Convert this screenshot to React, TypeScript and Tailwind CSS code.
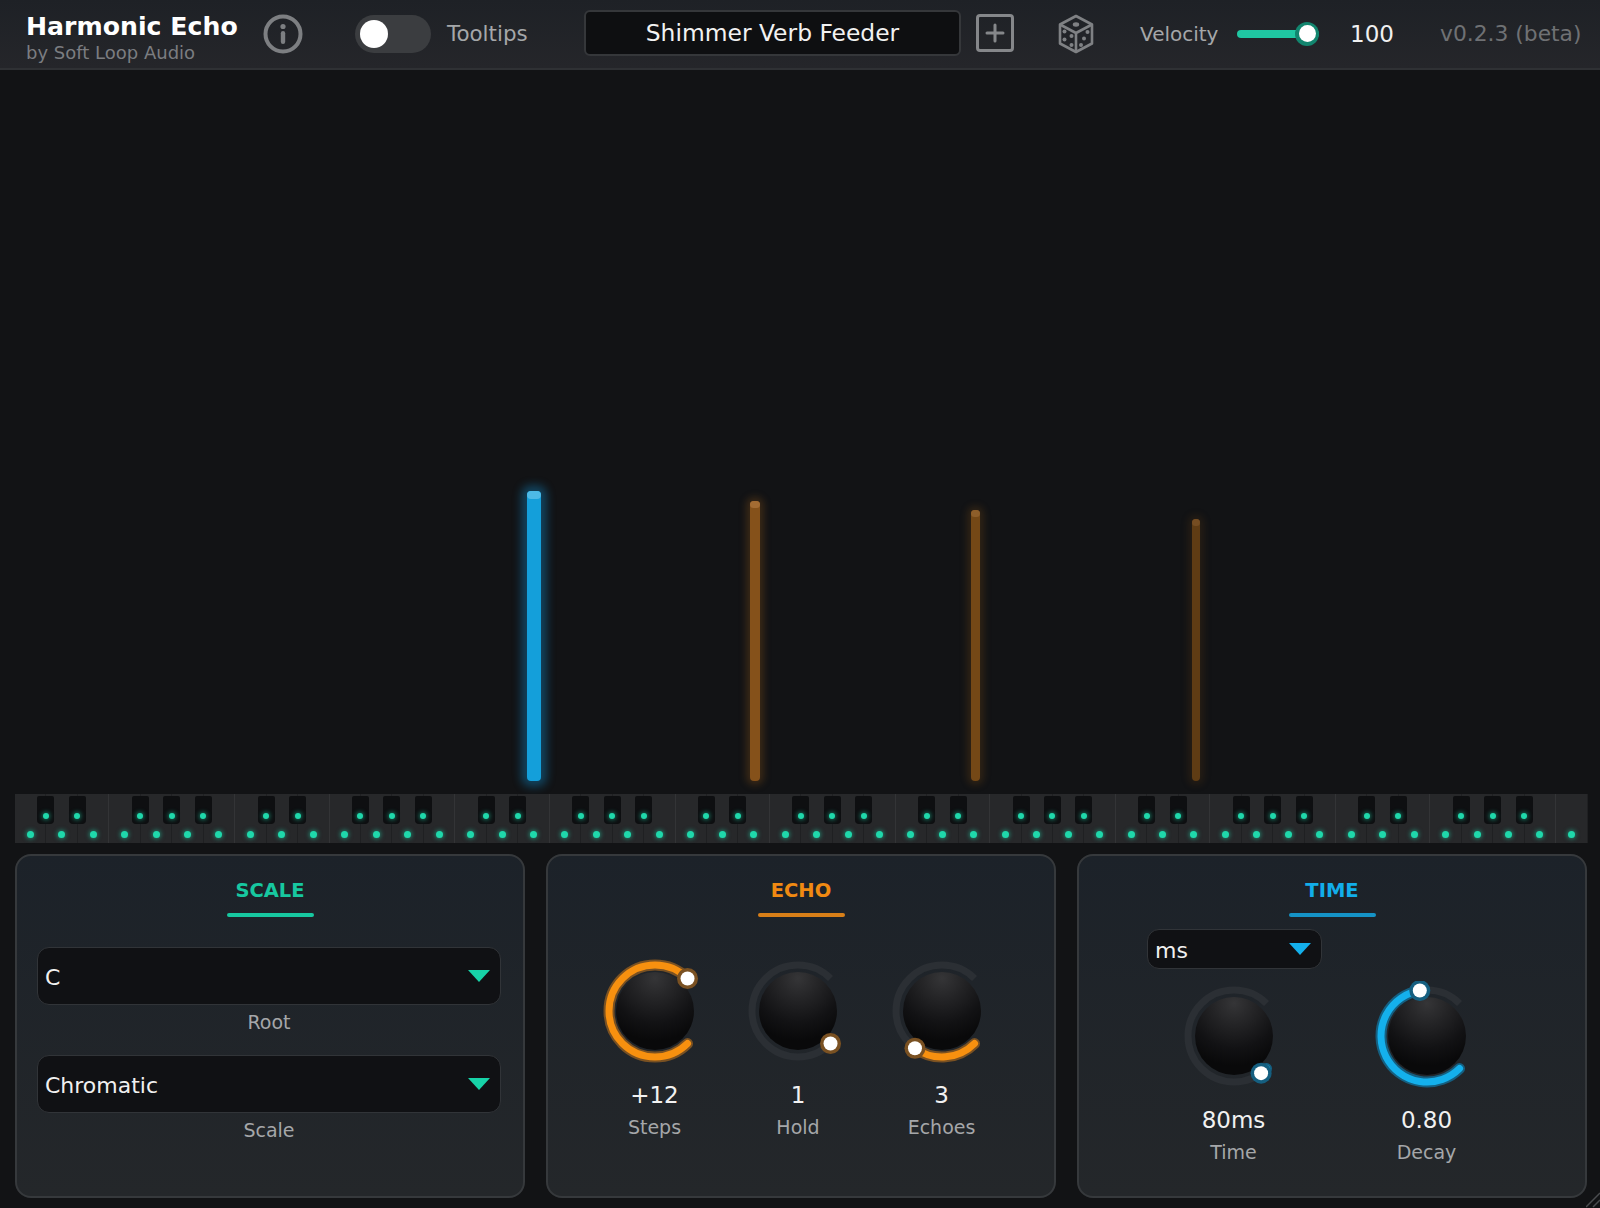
import React from 'react';

const blackAfter = [0, 1, 3, 4, 5];

const polar = (deg: number, r: number) => {
  const a = (deg * Math.PI) / 180;
  return [55 + r * Math.cos(a), 55 + r * Math.sin(a)];
};

const arcPath = (from: number, to: number, r: number) => {
  const [x1, y1] = polar(from, r);
  const [x2, y2] = polar(to, r);
  return `M${x1} ${y1}A${r} ${r} 0 ${to - from > 180 ? 1 : 0} 1 ${x2} ${y2}`;
};

const Knob = ({ id, value, color, ring }: { id: string; value: number; color: string; ring: string }) => {
  const end = 45 + value * 270;
  const [tx, ty] = polar(end, 46);
  return (
    <svg width="110" height="110" viewBox="0 0 110 110" className="block">
      <defs>
        <radialGradient id={id} cx="50%" cy="8%" r="80%">
          <stop offset="0%" stopColor="#353537" />
          <stop offset="32%" stopColor="#252527" />
          <stop offset="72%" stopColor="#121214" />
          <stop offset="100%" stopColor="#09090a" />
        </radialGradient>
      </defs>
      <path d={arcPath(45, 315, 46)} fill="none" stroke="#2b2f34" strokeWidth="7" />
      <circle cx="55" cy="55" r="39" fill={`url(#${id})`} />
      {value > 0 && (
        <>
          <path d={arcPath(45, end, 46)} fill="none" stroke={ring} strokeWidth="11" strokeLinecap="round" />
          <path d={arcPath(45, end, 46)} fill="none" stroke={color} strokeWidth="7" strokeLinecap="round" />
        </>
      )}
      <circle cx={tx} cy={ty} r="10.5" fill={ring} />
      <circle cx={tx} cy={ty} r="7" fill="#ffffff" />
    </svg>
  );
};

const KnobCell = ({ id, value, color, ring, text, label }: { id: string; value: number; color: string; ring: string; text: string; label: string }) => (
  <div className="flex flex-col items-center">
    <Knob id={id} value={value} color={color} ring={ring} />
    <div className="mt-[14.5px] text-[23px] leading-[28px] text-[#f1f1f1]">{text}</div>
    <div className="mt-[6.5px] text-[19px] leading-[24px] text-[#a5a7a9]">{label}</div>
  </div>
);

const Dropdown = ({ text, arrow, className }: { text: string; arrow: string; className: string }) => (
  <div className={`flex items-center justify-between rounded-[12px] border-[1.5px] border-[#313438] bg-[#101114] pl-[7px] pr-[10px] text-[22px] text-[#f0f0f0] ${className}`}>
    <span className="pt-[2px]">{text}</span>
    <svg width="22" height="12" viewBox="0 0 22 12" className="-mt-[1px]">
      <path d="M0 0H22L11 12Z" fill={arrow} />
    </svg>
  </div>
);

const Panel = ({ title, titleClass, lineClass, children }: { title: string; titleClass: string; lineClass: string; children: React.ReactNode }) => (
  <div className="flex h-[344px] w-[510px] shrink-0 flex-col rounded-[16px] border-2 border-[#36393c] bg-gradient-to-b from-[#1c2229] to-[#24272a]">
    <div className="flex flex-col items-center pt-[21px]">
      <div className="h-[28px]">
        <div className={`text-[19.5px] font-bold leading-[28px] ${titleClass}`}>{title}</div>
      </div>
      <div className={`mt-[8px] h-[4px] w-[87px] rounded-full ${lineClass}`} />
    </div>
    {children}
  </div>
);

const Dice = () => (
  <svg width="36" height="40" viewBox="0 0 36 40" fill="none" stroke="#7f8184" strokeWidth="2.6" strokeLinejoin="round">
    <path d="M18 2L34 10.5V29.5L18 38L2 29.5V10.5Z" />
    <path d="M2 10.5L18 19L34 10.5M18 19V38" />
    <g fill="#7f8184" stroke="none">
      <ellipse cx="18" cy="10.5" rx="3.2" ry="2.2" />
      <circle cx="6.5" cy="17.5" r="2" />
      <circle cx="13.5" cy="22" r="2" />
      <circle cx="6.5" cy="25.5" r="2" />
      <circle cx="13.5" cy="31" r="2" />
      <circle cx="23" cy="31" r="2" />
      <circle cx="26" cy="24.5" r="2" />
      <circle cx="29.5" cy="18" r="2" />
    </g>
  </svg>
);

export default function App() {
  const whites = Array.from({ length: 50 }, (_, i) => i);

  return (
    <div className="relative flex h-[1208px] w-[1600px] flex-col overflow-hidden bg-[#121315] font-['DejaVu_Sans',sans-serif]">
      {/* top bar */}
      <div className="flex h-[70px] shrink-0 items-center border-b-2 border-[#2f3134] bg-gradient-to-b from-[#1e2126] to-[#25262a] pb-[1px]">
        <div className="ml-[26px] w-[222px] pt-[9px]">
          <div className="text-[25.2px] font-bold leading-[28px] text-white">Harmonic Echo</div>
          <div className="mt-[2px] text-[18px] leading-[20px] text-[#7b7d81]">by Soft Loop Audio</div>
        </div>
        <svg width="40" height="40" viewBox="0 0 40 40" className="ml-[15px]">
          <circle cx="20" cy="20" r="17.5" fill="none" stroke="#7d7f82" strokeWidth="4" />
          <circle cx="20" cy="12.5" r="2.6" fill="#7d7f82" />
          <rect x="17.8" y="17" width="4.4" height="13" rx="2.2" fill="#7d7f82" />
        </svg>
        <div className="ml-[52px] flex h-[38px] w-[76px] items-center rounded-full bg-[#3b3d40] pl-[5px]">
          <div className="h-[28px] w-[28px] rounded-full bg-white" />
        </div>
        <div className="ml-[16px] w-[137px] pt-[1px] text-[21.4px] text-[#a5a7a9]">Tooltips</div>
        <div className="-mt-[2px] flex h-[46px] w-[377px] items-center justify-center rounded-[6px] border-2 border-[#35373a] bg-[#0e0f11] pt-[2px] text-[23.4px] text-[#f2f2f2]">
          Shimmer Verb Feeder
        </div>
        <div className="-mt-[1px] ml-[15px] flex h-[38px] w-[38px] items-center justify-center rounded-[4px] border-[3px] border-[#85878a]">
          <svg width="20" height="20" viewBox="0 0 20 20">
            <path d="M10 2V18M2 10H18" stroke="#85878a" strokeWidth="3" strokeLinecap="round" />
          </svg>
        </div>
        <div className="ml-[44px]">
          <Dice />
        </div>
        <div className="ml-[46px] w-[97px] pt-[1px] text-[20px] text-[#a5a7a9]">Velocity</div>
        <div className="relative flex h-[8px] w-[82px] items-center rounded-full bg-[#1fc7a2]">
          <div className="absolute left-[58px] flex h-[24px] w-[24px] items-center justify-center rounded-full bg-[#12856e]">
            <div className="h-[17px] w-[17px] rounded-full bg-white" />
          </div>
        </div>
        <div className="ml-[31px] w-[90px] pt-[1px] text-[23px] text-[#f0f0f0]">100</div>
        <div className="pt-[2px] text-[21.8px] text-[#6f7174]">v0.2.3 (beta)</div>
      </div>

      {/* note lane */}
      <div className="flex flex-1 items-end pb-[13px]">
        <div className="ml-[527px] h-[290px] w-[14px] rounded-[4px] bg-[#149fda] shadow-[0_0_8px_6px_rgba(18,125,180,0.45)]">
          <div className="h-[8px] rounded-full bg-[#4db9e6]" />
        </div>
        <div className="ml-[209px] h-[280px] w-[10px] rounded-[4px] bg-[#85511a] shadow-[0_0_7px_4px_rgba(133,81,26,0.35)]">
          <div className="h-[7px] rounded-full bg-[#a46c33]" />
        </div>
        <div className="ml-[211px] h-[271px] w-[9px] rounded-[4px] bg-[#744816] shadow-[0_0_7px_4px_rgba(116,72,22,0.3)]">
          <div className="h-[7px] rounded-full bg-[#8d5e2a]" />
        </div>
        <div className="ml-[212px] h-[262px] w-[8px] rounded-[4px] bg-[#5f3c14] shadow-[0_0_7px_4px_rgba(95,60,20,0.25)]">
          <div className="h-[7px] rounded-full bg-[#754d22]" />
        </div>
      </div>

      {/* keyboard */}
      <div className="ml-[15px] mr-[12px] flex h-[49px] shrink-0">
        {whites.map(i => (
          <div key={i} className={`relative flex flex-1 items-end justify-center border-r bg-[#27282a] pb-[5px] ${i % 7 === 2 || i % 7 === 6 ? 'border-[#333436]' : 'border-[#1f2022]'}`}>
            <div className="h-[7px] w-[7px] rounded-full bg-[#1fd8ab] shadow-[0_0_4px_1px_rgba(31,216,171,0.5)]" />
            {i < 49 && blackAfter.includes(i % 7) && (
              <div className="absolute -right-[9px] top-[2px] z-10 flex h-[28px] w-[17px] items-end justify-center rounded-b-[4px] rounded-t-[2px] bg-[#0e0f11] pb-[5px]">
                <div className="h-[6px] w-[6px] rounded-full bg-[#1fd8ab] shadow-[0_0_4px_1px_rgba(31,216,171,0.5)]" />
              </div>
            )}
          </div>
        ))}
      </div>

      {/* panels */}
      <div className="mb-[10px] mt-[11px] flex shrink-0 gap-[21px] pl-[15px]">
        <Panel title="SCALE" titleClass="text-[#17c8a0]" lineClass="bg-[#17c8a0]">
          <div className="pl-[20px] pr-[22px] pt-[30px] text-center">
            <Dropdown text="C" arrow="#17d3a8" className="h-[58px]" />
            <div className="mt-[5px] text-[19px] leading-[24px] text-[#a5a7a9]">Root</div>
            <Dropdown text="Chromatic" arrow="#17d3a8" className="mt-[21px] h-[58px]" />
            <div className="mt-[5px] text-[19px] leading-[24px] text-[#a5a7a9]">Scale</div>
          </div>
        </Panel>
        <Panel title="ECHO" titleClass="text-[#f08a12]" lineClass="bg-[#d87f18]">
          <div className="flex justify-center gap-[33.5px] pr-[6px] pt-[39px]">
            <KnobCell id="steps" value={1} color="#f7900f" ring="#7a5122" text="+12" label="Steps" />
            <KnobCell id="hold" value={0} color="#f7900f" ring="#7a5122" text="1" label="Hold" />
            <KnobCell id="echoes" value={0.3} color="#f7900f" ring="#7a5122" text="3" label="Echoes" />
          </div>
        </Panel>
        <Panel title="TIME" titleClass="text-[#12aeea]" lineClass="bg-[#1593c6]">
          <div className="pl-[68px] pt-[12px]">
            <Dropdown text="ms" arrow="#14b0ec" className="h-[40px] w-[175px]" />
          </div>
          <div className="flex justify-center gap-[83px] pr-[4px] pt-[12px]">
            <KnobCell id="time" value={0.033} color="#14b0ec" ring="#155f80" text="80ms" label="Time" />
            <KnobCell id="decay" value={0.8} color="#14b0ec" ring="#155f80" text="0.80" label="Decay" />
          </div>
        </Panel>
      </div>

      {/* resize grip */}
      <svg width="14" height="18" viewBox="0 0 14 18" className="absolute bottom-0 right-0">
        <path d="M0 17L14 3M7 17L14 10" stroke="#4a4c4f" strokeWidth="1.5" />
      </svg>
    </div>
  );
}
